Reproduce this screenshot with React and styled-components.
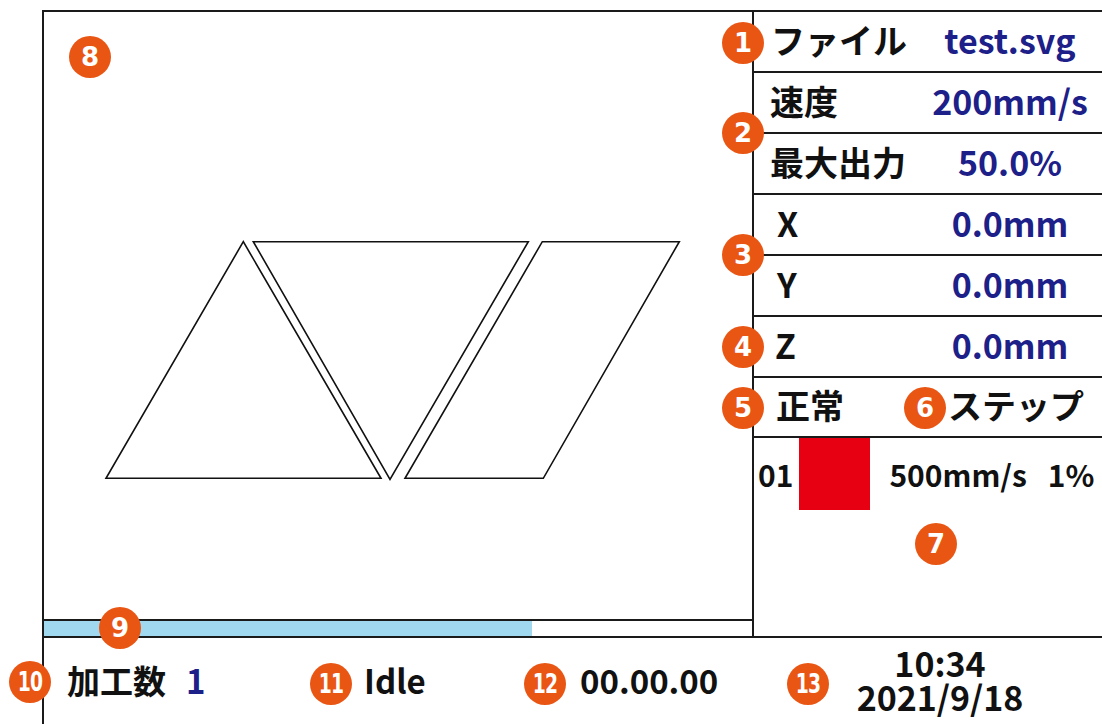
import React from 'react';
import styled, { createGlobalStyle } from 'styled-components';

const LINE = '#1a1a1a';
const NAVY = '#1d2088';
const ORANGE = '#e95513';

const GlobalStyle = createGlobalStyle`
  html, body {
    margin: 0;
    padding: 0;
    background: #fff;
  }
  body {
    font-family: "Noto Sans CJK JP", "Noto Sans", sans-serif;
    color: #111;
  }
`;

const Screen = styled.div`
  position: relative;
  width: 1102px;
  height: 724px;
  overflow: hidden;
  box-sizing: border-box;
  padding: 10px 0 0 42px;
  background: #fff;
`;

const Frame = styled.div`
  height: 100%;
  box-sizing: border-box;
  border-top: 2px solid ${LINE};
  border-left: 2px solid ${LINE};
  display: flex;
  flex-direction: column;
`;

const Upper = styled.div`
  height: 626px;
  flex: none;
  box-sizing: border-box;
  border-bottom: 2px solid ${LINE};
  display: grid;
  grid-template-columns: 710px 1fr;
`;

const CanvasColumn = styled.div`
  display: flex;
  flex-direction: column;
  box-sizing: border-box;
  border-right: 2px solid ${LINE};
`;

const DrawArea = styled.div`
  flex: 1;
  min-height: 0;
  svg {
    display: block;
    width: 100%;
    height: 100%;
  }
`;

const Progress = styled.div`
  height: 17px;
  flex: none;
  box-sizing: border-box;
  border-top: 2px solid ${LINE};
  background: #fff;
`;

const ProgressFill = styled.div`
  height: 100%;
  background: #a0d8ef;
`;

const Panel = styled.div`
  display: flex;
  flex-direction: column;
`;

const Row = styled.div`
  height: ${(p) => p.$h || 61}px;
  flex: none;
  box-sizing: border-box;
  padding-bottom: 4px;
  border-bottom: 2px solid ${LINE};
  display: grid;
  grid-template-columns: 164px 1fr;
  align-items: center;
  font-size: 34px;
  font-weight: 700;
  line-height: 1;
`;

const Label = styled.div`
  padding-left: ${(p) => p.$indent || 16}px;
  white-space: nowrap;
`;

const Value = styled.div`
  text-align: center;
  white-space: nowrap;
  color: ${(p) => (p.$plain ? '#111' : NAVY)};
  padding-left: ${(p) => p.$shift || 0}px;
`;

const StepArea = styled.div`
  flex: 1;
`;

const StepRow = styled.div`
  display: flex;
  align-items: center;
  padding-left: 4px;
  font-size: 30px;
  font-weight: 700;
  line-height: 1;
  white-space: nowrap;
`;

const Swatch = styled.div`
  width: 71px;
  height: 72px;
  margin: 0 19px 0 6px;
  background: ${(p) => p.$color};
`;

const StepPower = styled.span`
  margin-left: 21px;
`;

const BottomBar = styled.div`
  flex: 1;
  display: grid;
  grid-template-columns: 266px 214px 263px 1fr;
  align-items: center;
  font-weight: 700;
  font-size: 33px;
  line-height: 1;
  white-space: nowrap;
  padding-bottom: 2px;
`;

const Cell = styled.div`
  padding-left: ${(p) => p.$indent || 0}px;
`;

const Count = styled.span`
  color: ${NAVY};
  margin-left: 20px;
`;

const DateBlock = styled.div`
  display: flex;
  flex-direction: column;
  align-items: center;
  padding-right: 9px;
  font-size: 34px;
  line-height: 34px;
`;

const Marker = styled.div`
  position: absolute;
  width: 42px;
  height: 42px;
  margin: -21px 0 0 -21px;
  border-radius: 50%;
  background: ${ORANGE};
  color: #fff;
  display: flex;
  align-items: center;
  justify-content: center;
  font-family: "DejaVu Sans", "Liberation Sans", sans-serif;
  font-weight: 700;
  font-size: 26px;
  line-height: 1;
  span {
    display: inline-block;
    letter-spacing: ${(p) => (p.$wide ? '-1px' : '0')};
    transform: ${(p) => (p.$wide ? 'scaleX(0.72)' : 'none')};
  }
`;

const markers = [
  { n: 1, x: 743, y: 43 },
  { n: 2, x: 743, y: 133 },
  { n: 3, x: 743, y: 255 },
  { n: 4, x: 743, y: 347 },
  { n: 5, x: 743, y: 408 },
  { n: 6, x: 925, y: 408 },
  { n: 7, x: 936, y: 544 },
  { n: 8, x: 90, y: 57 },
  { n: 9, x: 120, y: 628 },
  { n: 10, x: 30, y: 682 },
  { n: 11, x: 331, y: 684 },
  { n: 12, x: 545, y: 684 },
  { n: 13, x: 808, y: 684 },
];

const rows = [
  { label: 'ファイル', value: 'test.svg', indent: 17 },
  { label: '速度', value: '200mm/s' },
  { label: '最大出力', value: '50.0%' },
  { label: 'X', value: '0.0mm', indent: 23 },
  { label: 'Y', value: '0.0mm', indent: 23 },
  { label: 'Z', value: '0.0mm', indent: 21 },
];

const shapes = [
  '243.3,241.7 106,478.3 381,478.3',
  '253.3,241.7 528.3,241.7 390,479.3',
  '542.3,241.7 679.3,241.7 543.3,478.3 405,478.3',
];

const Drawing = () => (
  <svg viewBox="44 12 708 607" preserveAspectRatio="none">
    {shapes.map((pts) => (
      <polygon
        key={pts}
        points={pts}
        fill="none"
        stroke="#111"
        strokeWidth="1.6"
        strokeLinejoin="miter"
      />
    ))}
  </svg>
);

const App = () => (
  <>
    <GlobalStyle />
    <Screen>
      <Frame>
        <Upper>
          <CanvasColumn>
            <DrawArea>
              <Drawing />
            </DrawArea>
            <Progress>
              <ProgressFill style={{ width: `${(488 / 708) * 100}%` }} />
            </Progress>
          </CanvasColumn>
          <Panel>
            {rows.map((r) => (
              <Row key={r.label}>
                <Label $indent={r.indent}>{r.label}</Label>
                <Value>{r.value}</Value>
              </Row>
            ))}
            <Row $h={60}>
              <Label $indent={22}>正常</Label>
              <Value $plain $shift={12}>ステップ</Value>
            </Row>
            <StepArea>
              <StepRow>
                <span>01</span>
                <Swatch $color="#e60012" />
                <span>500mm/s</span>
                <StepPower>1%</StepPower>
              </StepRow>
            </StepArea>
          </Panel>
        </Upper>
        <BottomBar>
          <Cell $indent={23}>
            加工数
            <Count>1</Count>
          </Cell>
          <Cell $indent={54}>Idle</Cell>
          <Cell $indent={56}>00.00.00</Cell>
          <DateBlock>
            <span>10:34</span>
            <span>2021/9/18</span>
          </DateBlock>
        </BottomBar>
      </Frame>
      {markers.map((m) => (
        <Marker key={m.n} $wide={m.n > 9} style={{ left: m.x, top: m.y }}>
          <span>{m.n}</span>
        </Marker>
      ))}
    </Screen>
  </>
);

export default App;
